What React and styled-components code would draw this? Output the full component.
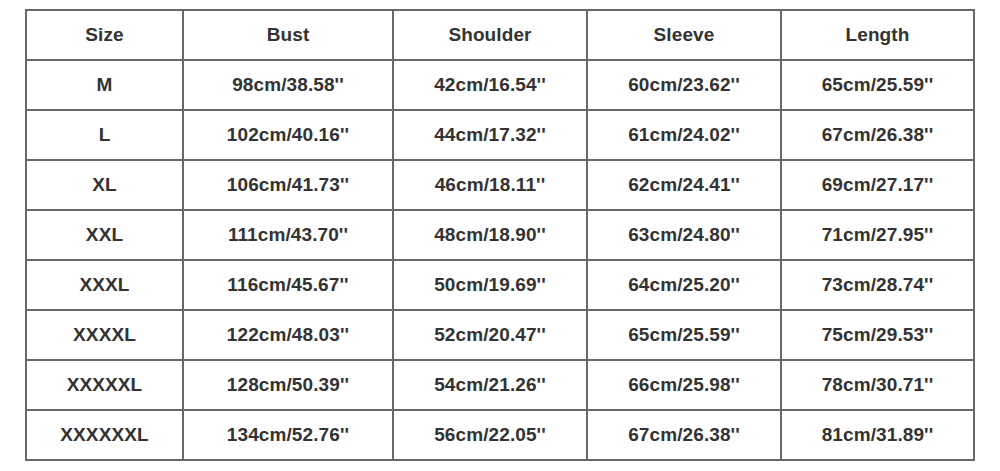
import React from 'react';
import styled, { createGlobalStyle } from 'styled-components';

const columns = ['Size', 'Bust', 'Shoulder', 'Sleeve', 'Length'];

const rows = [
  ['M', '98cm/38.58"', '42cm/16.54"', '60cm/23.62"', '65cm/25.59"'],
  ['L', '102cm/40.16"', '44cm/17.32"', '61cm/24.02"', '67cm/26.38"'],
  ['XL', '106cm/41.73"', '46cm/18.11"', '62cm/24.41"', '69cm/27.17"'],
  ['XXL', '111cm/43.70"', '48cm/18.90"', '63cm/24.80"', '71cm/27.95"'],
  ['XXXL', '116cm/45.67"', '50cm/19.69"', '64cm/25.20"', '73cm/28.74"'],
  ['XXXXL', '122cm/48.03"', '52cm/20.47"', '65cm/25.59"', '75cm/29.53"'],
  ['XXXXXL', '128cm/50.39"', '54cm/21.26"', '66cm/25.98"', '78cm/30.71"'],
  ['XXXXXXL', '134cm/52.76"', '56cm/22.05"', '67cm/26.38"', '81cm/31.89"'],
];

function App() {
  return (
    <>
      <GlobalStyle />
      <Styled.Page>
        <Styled.Chart>
          {columns.map((c) => (
            <Styled.Cell key={c}>{c}</Styled.Cell>
          ))}
          {rows.map((row) =>
            row.map((v, i) => (
              <Styled.Cell key={row[0] + i}>{v.replace('"', "''")}</Styled.Cell>
            ))
          )}
        </Styled.Chart>
      </Styled.Page>
    </>
  );
}

const GlobalStyle = createGlobalStyle`
  html, body {
    margin: 0;
    padding: 0;
    background: #fff;
  }
`;

const Styled = {
  Page: styled.div`
    width: 1000px;
    height: 471px;
    padding: 9px 0 0 25px;
    box-sizing: border-box;
    background: #fff;
  `,
  Chart: styled.div`
    display: grid;
    width: 950px;
    box-sizing: border-box;
    grid-template-columns: 155px 208px 192px 192px 191px;
    grid-auto-rows: 48px;
    gap: 2px;
    padding: 2px;
    background: #686868;
  `,
  Cell: styled.div`
    display: flex;
    align-items: center;
    justify-content: center;
    background: #fff;
    font-family: "Liberation Sans", Arial, sans-serif;
    font-weight: 700;
    font-size: 19px;
    color: #333;
    letter-spacing: 0.1px;
  `,
};

export default App;
